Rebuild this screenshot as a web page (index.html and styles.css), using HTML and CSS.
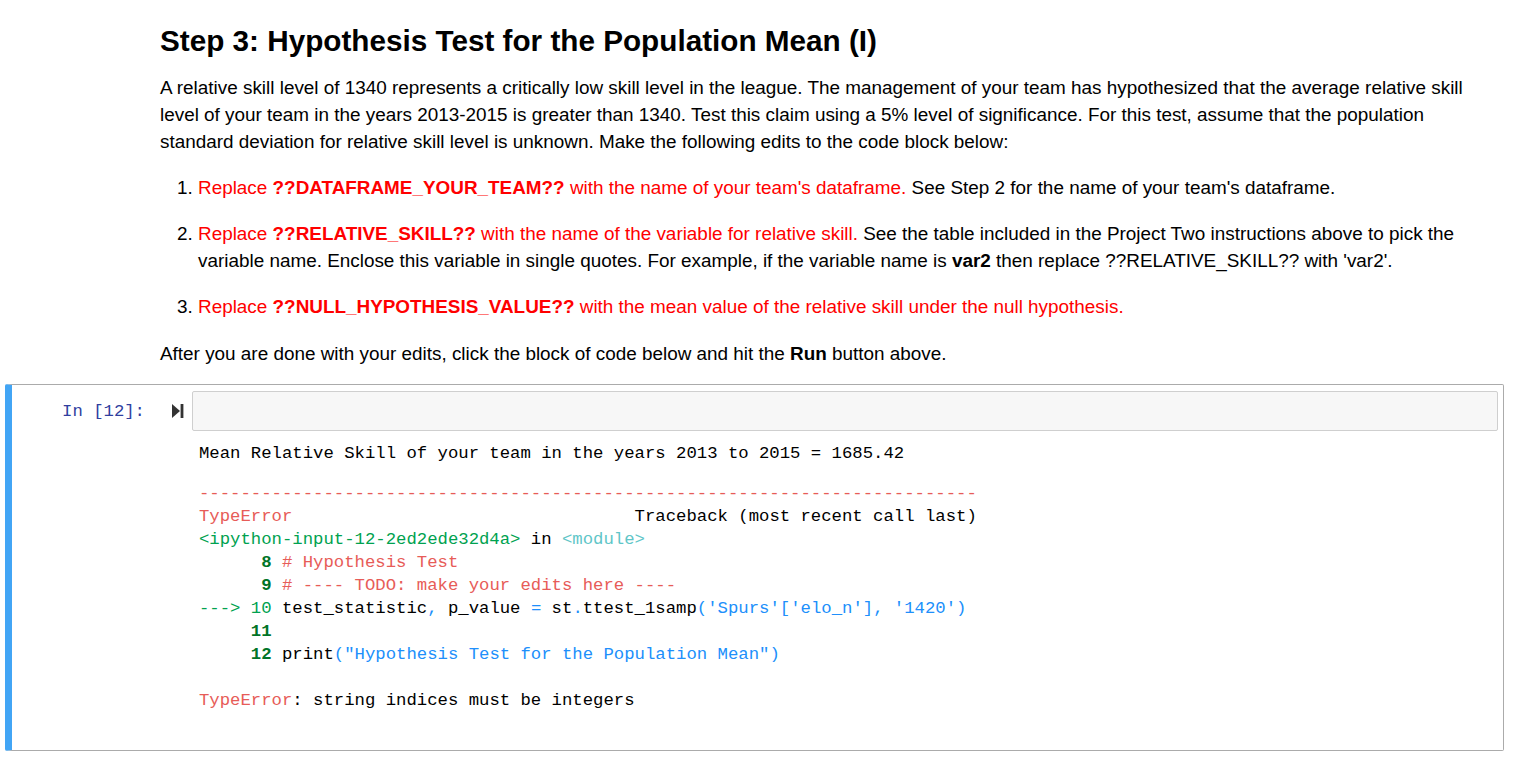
FILE: index.html
```html
<!DOCTYPE html>
<html>
<head>
<meta charset="utf-8">
<link rel="stylesheet" href="styles.css">
</head>
<body>
<div class="md">
  <h2 class="title">Step 3: Hypothesis Test for the Population Mean (I)</h2>
  <p class="para">A relative skill level of 1340 represents a critically low skill level in the league. The management of your team has hypothesized that the average relative skill level of your team in the years 2013-2015 is greater than 1340. Test this claim using a 5% level of significance. For this test, assume that the population standard deviation for relative skill level is unknown. Make the following edits to the code block below:</p>
  <ol class="steps">
    <li><span class="red">Replace <b>??DATAFRAME_YOUR_TEAM??</b> with the name of your team's dataframe.</span> See Step 2 for the name of your team's dataframe.</li>
    <li><span class="red">Replace <b>??RELATIVE_SKILL??</b> with the name of the variable for relative skill.</span> See the table included in the Project Two instructions above to pick the variable name. Enclose this variable in single quotes. For example, if the variable name is <b>var2</b> then replace ??RELATIVE_SKILL?? with 'var2'.</li>
    <li><span class="red">Replace <b>??NULL_HYPOTHESIS_VALUE??</b> with the mean value of the relative skill under the null hypothesis.</span></li>
  </ol>
  <p class="para">After you are done with your edits, click the block of code below and hit the <b>Run</b> button above.</p>
</div>
<div class="cell">
  <div class="input-row">
    <div class="prompt">In&nbsp;[12]:</div>
    <div class="run-btn"><svg width="12" height="14" viewBox="0 0 12 14"><path d="M0 0 L8 7 L0 14 Z" fill="#333"/><rect x="8.6" y="0" width="2.8" height="14" fill="#333"/></svg></div>
    <div class="input-area"></div>
  </div>
  <div class="output">
<pre class="stream">Mean Relative Skill of your team in the years 2013 to 2015 = 1685.42</pre>
<pre class="error"><span class="r">---------------------------------------------------------------------------</span>
<span class="r">TypeError</span>                                 Traceback (most recent call last)
<span class="g">&lt;ipython-input-12-2ed2ede32d4a&gt;</span> in <span class="c">&lt;module&gt;</span>
<span class="gb">      8</span> <span class="r"># Hypothesis Test</span>
<span class="gb">      9</span> <span class="r"># ---- TODO: make your edits here ----</span>
<span class="g">---&gt; 10</span> test_statistic<span class="b">,</span> p_value <span class="b">=</span> st<span class="b">.</span>ttest_1samp<span class="b">('Spurs'['elo_n'], '1420')</span>
<span class="gb">     11</span> 
<span class="gb">     12</span> print<span class="b">("Hypothesis Test for the Population Mean")</span>

<span class="r">TypeError</span>: string indices must be integers</pre>
  </div>
</div>
</body>
</html>
```
FILE: styles.css
```css
html, body {
  margin: 0;
  padding: 0;
  background: #fff;
}
body {
  font-family: "Liberation Sans", Arial, sans-serif;
  color: #000;
  width: 1513px;
}
.md {
  margin-left: 160px;
  width: 1320px;
  padding-top: 23px;
  padding-bottom: 17px;
}
.title {
  margin: 0;
  font-size: 29.7px;
  line-height: 36px;
  font-weight: bold;
}
.para {
  margin: 15px 0 0 0;
  font-size: 18.9px;
  line-height: 27px;
}
.steps {
  margin: 19px 0 0 0;
  padding-left: 38px;
  font-size: 18.9px;
  line-height: 27px;
}
.steps li {
  margin-bottom: 19px;
}
.steps li:last-child {
  margin-bottom: 0;
}
.steps + .para {
  margin-top: 20px;
}
.red {
  color: #ff0000;
}
.cell {
  margin-left: 5px;
  width: 1486px;
  border: 1px solid #ababab;
  border-left: 7px solid #42a5f5;
  border-radius: 2px;
  padding: 6px 5px 38px 0;
}
.input-row {
  display: flex;
  align-items: center;
}
.prompt {
  width: 133px;
  padding-right: 3px;
  text-align: right;
  font-family: "Liberation Mono", "DejaVu Sans Mono", monospace;
  font-size: 17.3px;
  color: #303f9f;
}
.run-btn {
  width: 44px;
  display: flex;
  align-items: center;
  padding-left: 24px;
  box-sizing: border-box;
}
.run-btn svg {
  display: block;
}
.input-area {
  flex: 1;
  height: 40px;
  box-sizing: border-box;
  background: #f7f7f7;
  border: 1px solid #cfcfcf;
  border-radius: 2px;
}
.output {
  margin-left: 180px;
  padding-left: 7px;
  padding-top: 11px;
}
pre {
  margin: 0;
  font-family: "Liberation Mono", "DejaVu Sans Mono", monospace;
  font-size: 17.3px;
  line-height: 23px;
  color: #000;
}
.stream {
  padding-bottom: 17px;
}
.r { color: #e75c58; }
.g { color: #00a250; }
.gb { color: #007427; font-weight: bold; }
.c { color: #60c6c8; }
.b { color: #208ffb; }
```
